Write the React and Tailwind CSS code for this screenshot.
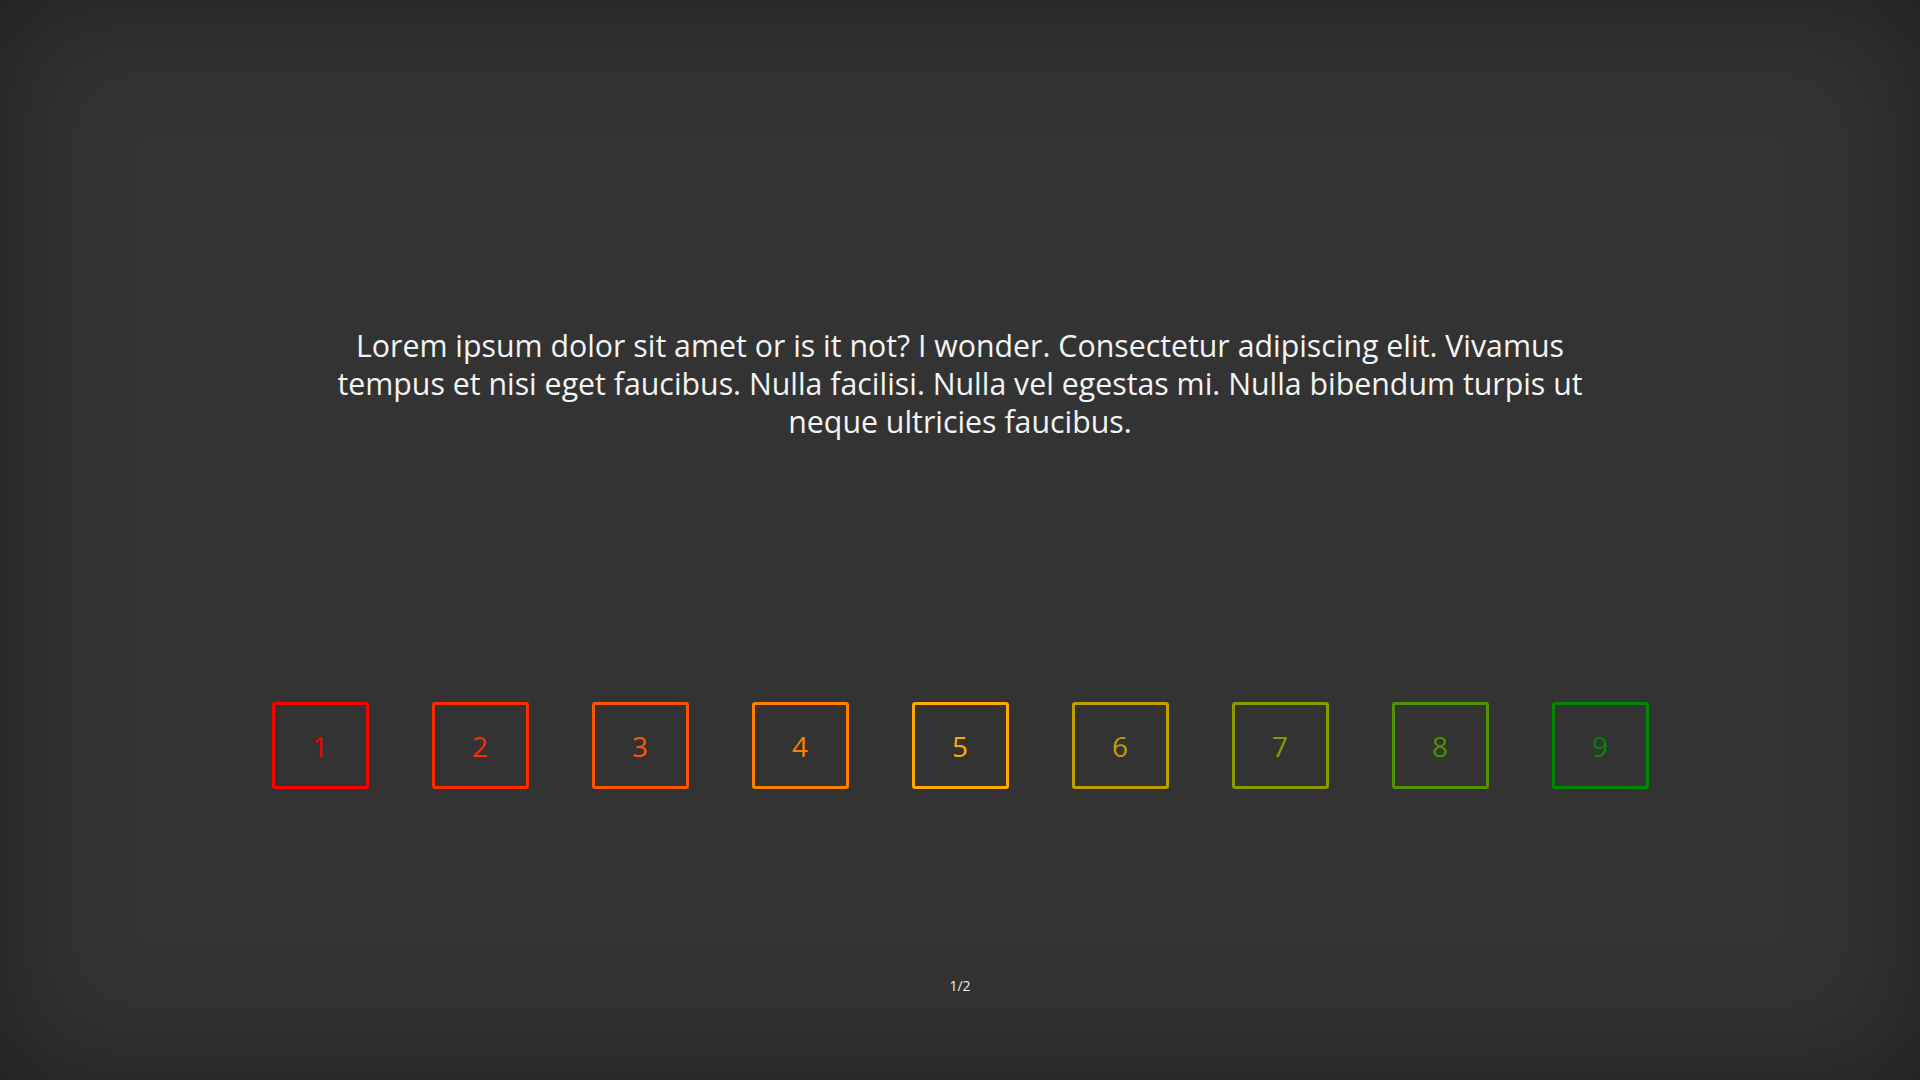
const options = [
  { n: 1, color: "border-[#ff0000] text-[#f00000]" },
  { n: 2, color: "border-[#ff2a00] text-[#ff2a00]" },
  { n: 3, color: "border-[#ff5500] text-[#ff5500]" },
  { n: 4, color: "border-[#ff8000] text-[#ff8000]" },
  { n: 5, color: "border-[#ffaa00] text-[#ffaa00]" },
  { n: 6, color: "border-[#bf9f00] text-[#bf9f00]" },
  { n: 7, color: "border-[#8a9a00] text-[#8a9a00]" },
  { n: 8, color: "border-[#4c9400] text-[#4c9400]" },
  { n: 9, color: "border-[#008800] text-[#008800]" },
];

const App = () => {
  return (
    <div
      className="h-screen w-full bg-[#333333] shadow-[inset_0_0_120px_rgba(0,0,0,0.4)] flex flex-col items-center text-white"
      style={{ fontFamily: '"Open Sans", "Noto Sans", sans-serif' }}
    >
      <p className="mt-[327px] w-[1400px] text-center text-[30.3px] leading-[38px] text-[#f4f4f4]">
        Lorem ipsum dolor sit amet or is it not? I wonder. Consectetur
        adipiscing elit. Vivamus
        <br />
        tempus et nisi eget faucibus. Nulla facilisi. Nulla vel egestas mi.
        Nulla bibendum turpis ut
        <br />
        neque ultricies faucibus.
      </p>

      <div className="mt-[261px] flex gap-[63px]">
        {options.map((opt) => (
          <button
            key={opt.n}
            className={`w-[97px] h-[87px] border-[3px] rounded-[3px] flex items-center justify-center text-[28px] ${opt.color}`}
          >
            {opt.n}
          </button>
        ))}
      </div>

      <div className="mt-[187px] text-[14px] leading-[20px] text-[#eeeeee]">
        1/2
      </div>
    </div>
  );
};

export default App;
